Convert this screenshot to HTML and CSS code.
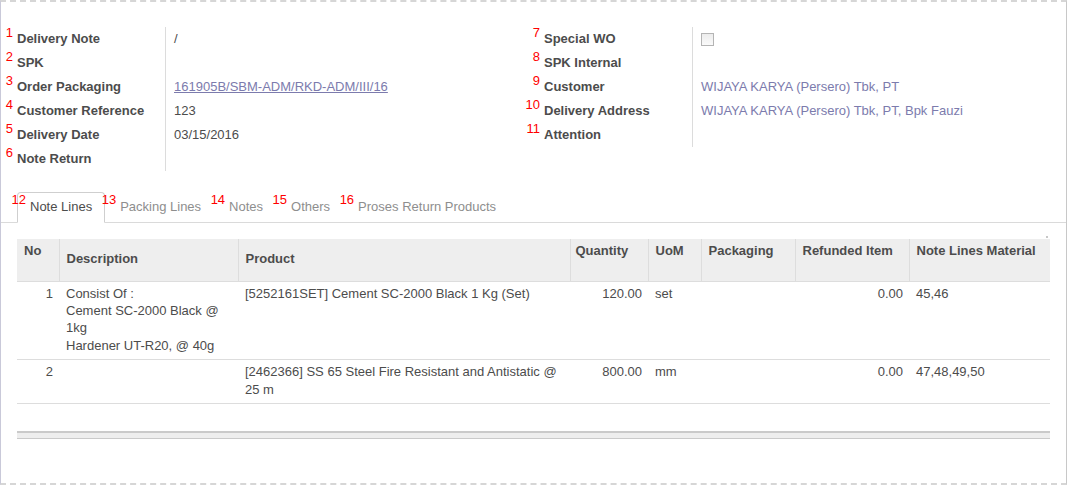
FILE: index.html
```html
<!DOCTYPE html>
<html>
<head>
<meta charset="utf-8">
<link rel="stylesheet" href="styles.css">
</head>
<body>
<div class="sheet">
  <div class="form">
    <div class="group">
      <span class="num">1</span><span class="lbl">Delivery Note</span><span class="val">/</span>
      <span class="num">2</span><span class="lbl">SPK</span><span class="val"></span>
      <span class="num">3</span><span class="lbl">Order Packaging</span><span class="val"><a class="link" href="#">161905B/SBM-ADM/RKD-ADM/III/16</a></span>
      <span class="num">4</span><span class="lbl">Customer Reference</span><span class="val">123</span>
      <span class="num">5</span><span class="lbl">Delivery Date</span><span class="val">03/15/2016</span>
      <span class="num">6</span><span class="lbl">Note Return</span><span class="val"></span>
    </div>
    <div class="group">
      <span class="num">7</span><span class="lbl">Special WO</span><span class="val"><span class="checkbox"></span></span>
      <span class="num">8</span><span class="lbl">SPK Internal</span><span class="val"></span>
      <span class="num">9</span><span class="lbl">Customer</span><span class="val purple">WIJAYA KARYA (Persero) Tbk, PT</span>
      <span class="num">10</span><span class="lbl">Delivery Address</span><span class="val purple">WIJAYA KARYA (Persero) Tbk, PT, Bpk Fauzi</span>
      <span class="num">11</span><span class="lbl">Attention</span><span class="val"></span>
    </div>
  </div>

  <ul class="tabs">
    <li class="tab active"><span class="tab-label"><span class="tnum">12</span>Note Lines</span></li>
    <li class="tab"><span class="tab-label"><span class="tnum">13</span>Packing Lines</span></li>
    <li class="tab"><span class="tab-label"><span class="tnum">14</span>Notes</span></li>
    <li class="tab"><span class="tab-label"><span class="tnum">15</span>Others</span></li>
    <li class="tab"><span class="tab-label"><span class="tnum">16</span>Proses Return Products</span></li>
  </ul>

  <div class="list">
    <span class="handle"></span>
    <table class="grid">
      <colgroup>
        <col class="c-no"><col class="c-desc"><col class="c-prod"><col class="c-qty"><col class="c-uom"><col class="c-pack"><col class="c-ref"><col class="c-mat">
      </colgroup>
      <thead>
        <tr>
          <th>No</th>
          <th class="mid">Description</th>
          <th class="mid">Product</th>
          <th class="tight">Quantity</th>
          <th>UoM</th>
          <th>Packaging</th>
          <th>Refunded Item</th>
          <th>Note Lines Material</th>
        </tr>
      </thead>
      <tbody>
        <tr>
          <td class="r">1</td>
          <td>Consist Of :<br>Cement SC-2000 Black @<br>1kg<br>Hardener UT-R20, @ 40g</td>
          <td>[5252161SET] Cement SC-2000 Black 1 Kg (Set)</td>
          <td class="r">120.00</td>
          <td>set</td>
          <td></td>
          <td class="r">0.00</td>
          <td>45,46</td>
        </tr>
        <tr>
          <td class="r">2</td>
          <td></td>
          <td>[2462366] SS 65 Steel Fire Resistant and Antistatic @ 25 m</td>
          <td class="r">800.00</td>
          <td>mm</td>
          <td></td>
          <td class="r">0.00</td>
          <td>47,48,49,50</td>
        </tr>
      </tbody>
    </table>
    <div class="spacer"></div>
    <div class="footer-bar"></div>
  </div>
</div>
</body>
</html>
```

FILE: styles.css
```css
html, body {
  margin: 0;
  padding: 0;
  background: #ffffff;
}

body {
  font-family: "Liberation Sans", Arial, sans-serif;
  font-size: 13px;
  color: #4c4c4c;
}

.sheet {
  box-sizing: border-box;
  width: 1067px;
  height: 485px;
  border-left: 1px solid #c9c9d9;
  border-right: 1px solid #c8c8c8;
  border-top: 2px dashed #d6d6d6;
  border-bottom: 2px dashed #d6d6d6;
  position: relative;
}

/* ---------- form ---------- */
.form {
  display: grid;
  grid-template-columns: 527px 1fr;
  padding: 25px 0 21px 2px;
}

.group {
  display: grid;
  grid-template-columns: 14px 148px 1fr;
  grid-auto-rows: 24px;
  align-items: start;
}

.num {
  justify-self: end;
  padding-right: 4px;
  color: #ff0000;
  font-size: 13px;
  line-height: 14px;
  margin-top: -1px;
  white-space: nowrap;
}

.lbl {
  font-weight: bold;
  line-height: 24px;
  color: #4c4c4c;
  white-space: nowrap;
}

.val {
  align-self: stretch;
  border-left: 1px solid #dcdcdc;
  padding-left: 8px;
  line-height: 24px;
  white-space: nowrap;
}

.link {
  color: #7c7bad;
  text-decoration: underline;
}

.purple {
  color: #7c7bad;
}

.checkbox {
  display: inline-block;
  box-sizing: border-box;
  width: 13px;
  height: 13px;
  margin-top: 6px;
  border: 1px solid #b4b4b4;
  background: linear-gradient(#ececec, #fafafa);
  vertical-align: top;
}

/* ---------- tabs ---------- */
.tabs {
  list-style: none;
  margin: 0;
  padding: 0 0 0 16px;
  display: flex;
  border-bottom: 1px solid #dadada;
}

.tab {
  padding: 5px 12px 6px;
  line-height: 18px;
  border: 1px solid transparent;
  margin-bottom: -1px;
  margin-right: 2px;
  color: #8e8e8e;
  border-radius: 4px 4px 0 0;
  white-space: nowrap;
}

.tab.active {
  color: #4c4c4c;
  border-color: #cfcfcf;
  border-bottom-color: #ffffff;
  background: #ffffff;
}

.tab-label {
  position: relative;
}

.tnum {
  position: absolute;
  right: calc(100% + 4px);
  top: -6px;
  color: #ff0000;
  font-size: 13px;
  line-height: 14px;
}

/* ---------- list ---------- */
.list {
  margin: 16px 16px 0;
  position: relative;
}

.handle {
  position: absolute;
  right: 2px;
  top: -3px;
  width: 2px;
  height: 2px;
  background: #c8c8c8;
}

.grid {
  width: 100%;
  table-layout: fixed;
  border-collapse: collapse;
}

.c-no { width: 42px; }
.c-desc { width: 179px; }
.c-prod { width: 332px; }
.c-qty { width: 78px; }
.c-uom { width: 53px; }
.c-pack { width: 94px; }
.c-ref { width: 114px; }
.c-mat { width: 141px; }

.grid thead tr {
  height: 42px;
}

.grid th {
  background: #eeeeee;
  font-weight: bold;
  text-align: left;
  vertical-align: top;
  padding: 4px 7px 0;
  line-height: 16px;
  border-left: 1px solid #dddddd;
  border-bottom: 1px solid #dddddd;
  color: #4c4c4c;
  white-space: nowrap;
  overflow: hidden;
}

.grid th:first-child {
  border-left: none;
}

.grid th.mid {
  vertical-align: middle;
  padding-top: 0;
  padding-bottom: 2px;
}

.grid th.tight {
  padding-left: 5px;
}

.grid td {
  vertical-align: top;
  padding: 3px 6px 5px 7px;
  line-height: 17.4px;
  border-bottom: 1px solid #dddddd;
}

.grid td.r {
  text-align: right;
}

.spacer {
  height: 27px;
}

.footer-bar {
  height: 5px;
  background: #eeeeee;
  border-top: 2px solid #cacaca;
  border-bottom: 1px solid #cacaca;
}
```
